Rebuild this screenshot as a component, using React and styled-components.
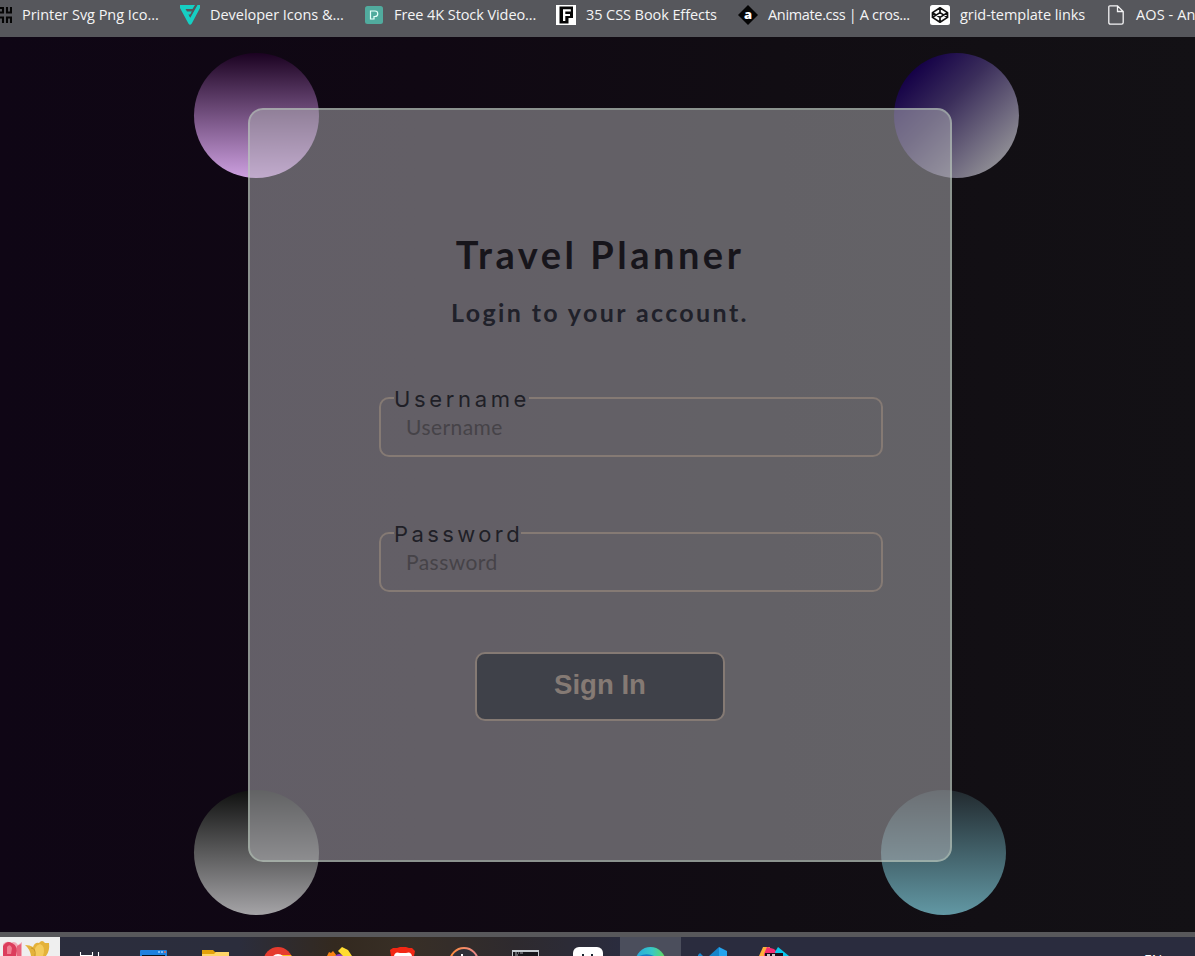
import React from 'react';
import styled, { createGlobalStyle } from 'styled-components';

const Global = createGlobalStyle`
  *, *::before, *::after { box-sizing: border-box; }
  body { margin: 0; overflow: hidden; background: #110c14; }
`;

const Screen = styled.div`
  width: 1195px;
  height: 956px;
  display: flex;
  flex-direction: column;
  overflow: hidden;
`;

const BookmarksBar = styled.nav`
  flex: none;
  height: 37px;
  padding-top: 3px;
  display: flex;
  align-items: flex-start;
  overflow: hidden;
  background: #56575c;
`;

const BookmarkTrack = styled.div`
  display: flex;
  margin-left: -8px;
`;

const Bookmark = styled.a`
  flex: none;
  width: ${(p) => p.$width}px;
  height: 24px;
  display: flex;
  align-items: center;
  gap: 10px;
  svg { flex: none; display: block; }
`;

const BookmarkLabel = styled.span`
  font: 400 14.5px/24px "Open Sans", "Noto Sans", sans-serif;
  letter-spacing: ${(p) => p.$spacing}px;
  color: #f4f4f5;
  white-space: nowrap;
`;

const Stage = styled.main`
  flex: none;
  position: relative;
  height: 895px;
  padding: 71px 0 0 248px;
  background: linear-gradient(90deg, #0f0615 0%, #100813 35%, #110d13 65%, #131115 100%);
`;

const Orb = styled.div`
  position: absolute;
  left: ${(p) => p.$left}px;
  top: ${(p) => p.$top}px;
  width: 125px;
  height: 125px;
  border-radius: 50%;
  background: ${(p) => p.$fill};
`;

const Card = styled.form`
  position: relative;
  width: 704px;
  height: 754px;
  padding-top: 121px;
  display: flex;
  flex-direction: column;
  align-items: center;
  border: 2px solid rgba(188, 208, 190, 0.45);
  border-radius: 15px;
  background: rgba(182, 181, 185, 0.5);
`;

const Title = styled.h1`
  margin: 0;
  height: 46px;
  font: 700 38px/46px Lato, sans-serif;
  letter-spacing: 3.5px;
  color: #17151b;
  white-space: nowrap;
`;

const Subtitle = styled.h2`
  margin: 19px 0 0;
  height: 32px;
  font: 700 25px/32px Lato, sans-serif;
  letter-spacing: 2.38px;
  color: #20212a;
  white-space: nowrap;
`;

const Field = styled.fieldset`
  margin: ${(p) => p.$top}px 0 0 62px;
  width: 504px;
  height: 71px;
  padding: 0 12px 0 13px;
  border: 2px solid #857a74;
  border-radius: 10px;
`;

const Legend = styled.legend`
  height: 24px;
  width: ${(p) => p.$width}px;
  padding: 1px 0 0;
  font: 400 22px/24px Inter, sans-serif;
  letter-spacing: ${(p) => p.$spacing}px;
  color: #201f27;
  white-space: nowrap;
`;

const Input = styled.input`
  display: block;
  width: 100%;
  height: 32px;
  margin-top: 1px;
  padding: 0 12px;
  border: 0;
  outline: 0;
  background: transparent;
  font: 400 21px/32px Lato, sans-serif;
  letter-spacing: 0.45px;
  &::placeholder { color: #464348; opacity: 1; }
`;

const SignIn = styled.button`
  margin-top: 60px;
  width: 250px;
  height: 69px;
  padding: 0 0 4px;
  border: 2px solid #857a74;
  border-radius: 10px;
  background: #3f4149;
  color: #857a74;
  font: 700 27.6px/32px "Liberation Sans", sans-serif;
`;

const WindowEdge = styled.div`
  flex: none;
  height: 5px;
  background: #58585b;
`;

const Taskbar = styled.footer`
  flex: none;
  height: 19px;
  display: flex;
  overflow: hidden;
  background: linear-gradient(90deg, #2b2d3d 0%, #2b2d3c 20%, #33291f 28%, #382f26 34%, #2e2a2e 43%, #2a2c3e 52%, #2a2c3e 100%);
`;

const Widget = styled.div`
  flex: none;
  width: 60px;
  height: 19px;
  background: #efefef;
  svg { display: block; }
`;

const Slot = styled.div`
  flex: none;
  width: ${(p) => p.$width}px;
  height: 19px;
  padding-top: 10px;
  display: flex;
  justify-content: center;
  background: ${(p) => (p.$active ? '#4b4e5c' : 'transparent')};
  svg { display: block; flex: none; }
`;

const Language = styled.span`
  margin: 14px 0 0 auto;
  width: 51px;
  font: 400 14px/18px "Open Sans", sans-serif;
  color: #fff;
`;

const Glyph = ({ children, w = 20, h = 20 }) => (
  <svg width={w} height={h} viewBox={`0 0 ${w} ${h}`} fill="none">{children}</svg>
);

const bookmarks = [
  { label: 'Printer Svg Png Ico...', width: 188, spacing: -0.03, icon: (
    <Glyph><path d="M8 3H12M11 3V8M8 7.5H12M15 2V7.5H19V2M8 12.5H11V18M15 18V12.5H19V18" stroke="#050505" strokeWidth="2.1" /></Glyph>) },
  { label: 'Developer Icons &...', width: 184, spacing: -0.03, icon: (
    <Glyph>
      <path d="M0 0H15L12.5 4H5.5L7 6.6H12L10.5 9.5H8.4L10.3 12.8L17.5 0H20V3L11.8 18.5Q10 21 8.4 18.6L0 3Z" fill="#16cfc3" />
      <path d="M16.2 0L9.8 11.5" stroke="#56575c" strokeWidth="1.1" />
    </Glyph>) },
  { label: 'Free 4K Stock Video...', width: 192, spacing: -0.08, icon: (
    <Glyph>
      <rect x="1" y="1" width="18" height="18" rx="2.5" fill="#51ab9e" />
      <path d="M6.5 14V6H11A2.7 2.7 0 0 1 11 11.5H10V14Z" stroke="#e6fffa" strokeWidth="1.2" />
    </Glyph>) },
  { label: '35 CSS Book Effects', width: 182, spacing: -0.08, icon: (
    <Glyph>
      <rect width="20" height="20" fill="#fff" />
      <path d="M3.5 1.5H17V13H12.5V18.5H3.5Z" fill="#050505" />
      <path d="M7 4.2H14.8V6.4H9.3V9H14V11.1H9.3V16H7Z" fill="#fff" />
    </Glyph>) },
  { label: 'Animate.css | A cros...', width: 192, spacing: -0.34, icon: (
    <Glyph>
      <path d="M10 0L20 10L10 20L0 10Z" fill="#050505" />
      <text x="10" y="14" textAnchor="middle" fontFamily="Open Sans, sans-serif" fontWeight="800" fontSize="13" fill="#fff">a</text>
    </Glyph>) },
  { label: 'grid-template links', width: 176, spacing: -0.05, icon: (
    <Glyph>
      <rect width="20" height="20" rx="2.5" fill="#fff" />
      <path d="M10 2.8L17.5 7.6V12.4L10 17.2L2.5 12.4V7.6ZM2.5 7.6L10 12.4L17.5 7.6M2.5 12.4L10 7.6L17.5 12.4M10 2.8V7.6M10 12.4V17.2" stroke="#111" strokeWidth="1.7" strokeLinejoin="round" />
    </Glyph>) },
  { label: 'AOS - Animate', width: 130, spacing: 0.1, icon: (
    <Glyph><path d="M4 .8H11.5L17.2 6.5V17.5Q17.2 19.2 15.5 19.2H4.5Q2.8 19.2 2.8 17.5V2Q2.8 .8 4 .8ZM11.5 1V6.5H17" stroke="#f4f4f5" strokeWidth="1.3" /></Glyph>) },
];

const apps = [
  { id: 'tasks', width: 62, icon: <path d="M5.5 5V9M17.5 5V9M23.5 5V9M5.5 8.5H17.5" stroke="#fff" strokeWidth="1.1" /> },
  { id: 'window', icon: <><path d="M3 9V4Q3 3 4 3H29Q30 3 30 4V9Z" fill="#1f81df" /><path d="M5 8H28V9H5Z" fill="#071521" /><path d="M21 5H23M24 5H26" stroke="#9ed0ff" strokeWidth="1.5" /><path d="M27 5H29" stroke="#e77257" strokeWidth="1.5" /></> },
  { id: 'files', icon: <><path d="M3 3H14L16 5H30V9H3Z" fill="#e3a20b" /><path d="M3 7H15L17 5H30V9H3Z" fill="#ffd568" /></> },
  { id: 'chrome', icon: <><circle cx="16" cy="14.5" r="14.5" fill="#e63b2e" /><path d="M16 8H29Q31 10 30 13H16Z" fill="#fbbc1b" /><circle cx="16" cy="14" r="7" fill="#fff" /></> },
  { id: 'tools', icon: <><path d="M3 9L5 5L7 6L9 4L13 9Z" fill="#f98412" /><path d="M11 9Q15 5 20 9Z" fill="#923fc1" /><path d="M14 4L18 0L24 3L28 9H19Z" fill="#ffdc31" /></> },
  { id: 'brave', icon: <><path d="M4 3L7 1L11 1L14 0H20L23 1L26 1L29 4L28 9H5Z" fill="#f32714" /><path d="M8 9Q9 4 14 6H20Q25 4 26 9Z" fill="#fff" /></> },
  { id: 'player', icon: <><circle cx="16" cy="15" r="14" fill="#303139" stroke="url(#ring)" strokeWidth="2" /><path d="M14 7V9" stroke="#fff" strokeWidth="2" /><defs><linearGradient id="ring"><stop stopColor="#ff8b39" /><stop offset="1" stopColor="#e9898e" /></linearGradient></defs></> },
  { id: 'terminal', icon: <><path d="M1 3H28V9H1Z" fill="#c6cbd0" /><path d="M2 5H27V9H2Z" fill="#17171c" /><path d="M4 6H6M7 6H8M9 6H12M4 8H7" stroke="#a9aab0" /></> },
  { id: 'face', icon: <><rect x="0" y="0" width="30" height="20" rx="6" fill="#fff" /><path d="M10 7V9M19 7V9" stroke="#17232d" strokeWidth="2" /></> },
  { id: 'edge', width: 61, active: true, icon: <><circle cx="15.5" cy="15" r="15" fill="url(#wave)" /><path d="M2 10Q11 5 19 9V10Z" fill="#177cc5" /><defs><linearGradient id="wave"><stop stopColor="#25a9de" /><stop offset=".55" stopColor="#38c8c6" /><stop offset="1" stopColor="#61dc57" /></linearGradient></defs></> },
  { id: 'code', icon: <><path d="M2 8L4 6L7 9H2Z" fill="#168ad1" /><path d="M13 9L23 0V9Z" fill="#1684ca" /><path d="M23 0L31 4V9H23Z" fill="#24a4ee" /></> },
  { id: 'ide', icon: <><path d="M1 9L5 0H12L9 9Z" fill="#ffae3b" /><path d="M6 7L9 0L16 2L20 6V9H6Z" fill="#f52d73" /><path d="M17 5L20 0L31 9H18Z" fill="#09c7ed" /><path d="M7 6H25V9H7Z" fill="#200d1b" /><path d="M9 8H12M14 8H17" stroke="#fff" strokeWidth="1.5" /></> },
];

const Tulips = () => (
  <svg width="60" height="19" viewBox="0 0 60 19">
    <path d="M3 19V7Q7 3 11 6Q15 3 18 8L22 5V19Z" fill="#f2a9b6" />
    <path d="M3 19V9Q7 3 12 6Q19 9 16 19Z" fill="#dc3d5c" />
    <path d="M7 10Q10 6 12 11L11 17H7Z" fill="#ef7f92" />
    <path d="M17 9L21 7V19H17Z" fill="#e7637c" />
    <path d="M25 8Q30 8 33 10Q35 5 39 6Q42 2 45 6L49 6Q50 14 46 19H31Q30 12 25 8Z" fill="#e4b23a" />
    <path d="M35 19Q33 9 40 7Q46 9 43 19Z" fill="#f4cb5c" />
    <path d="M31 11Q36 11 35 19" stroke="#c89427" fill="none" />
  </svg>
);

export default function App() {
  return (
    <Screen>
      <Global />
      <BookmarksBar>
        <BookmarkTrack>
          {bookmarks.map((b) => (
            <Bookmark key={b.label} $width={b.width}>
              {b.icon}
              <BookmarkLabel $spacing={b.spacing}>{b.label}</BookmarkLabel>
            </Bookmark>
          ))}
        </BookmarkTrack>
      </BookmarksBar>
      <Stage>
        <Orb $left={194.4} $top={16.4} $fill="linear-gradient(180deg, #1b0221 0%, #cda0e0 100%)" />
        <Orb $left={894.4} $top={16.4} $fill="linear-gradient(135deg, #140047 14%, #3b2e5b 42%, #929197 88%)" />
        <Orb $left={194.4} $top={753.4} $fill="linear-gradient(180deg, #0f100f 0%, #a5a4a7 100%)" />
        <Orb $left={881.4} $top={753.4} $fill="linear-gradient(180deg, #222a2f 0%, #6298a4 100%)" />
        <Card onSubmit={(e) => e.preventDefault()}>
          <Title>Travel Planner</Title>
          <Subtitle>Login to your account.</Subtitle>
          <Field $top={58}>
            <Legend $width={135} $spacing={3.65}>Username</Legend>
            <Input placeholder="Username" />
          </Field>
          <Field $top={64}>
            <Legend $width={127} $spacing={3.4}>Password</Legend>
            <Input type="password" placeholder="Password" />
          </Field>
          <SignIn type="submit">Sign In</SignIn>
        </Card>
      </Stage>
      <WindowEdge />
      <Taskbar>
        <Widget><Tulips /></Widget>
        {apps.map((a) => (
          <Slot key={a.id} $active={a.active} $width={a.width || 62.25}>
            <Glyph w={32} h={9}>{a.icon}</Glyph>
          </Slot>
        ))}
        <Language>EN</Language>
      </Taskbar>
    </Screen>
  );
}
